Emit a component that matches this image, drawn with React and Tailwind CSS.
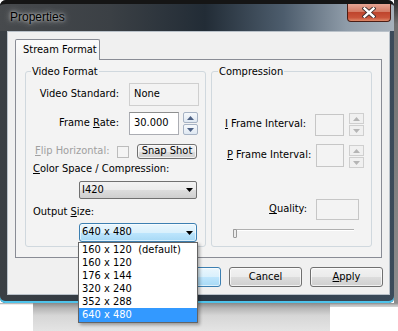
import React from 'react'

const btn =
  'flex items-center justify-center rounded-[3px] border border-[#707070] bg-[linear-gradient(180deg,#f2f2f2_0%,#ebebeb_50%,#dddddd_50%,#cfcfcf_100%)] shadow-[inset_0_0_0_1px_rgba(255,255,255,0.7)]'
const btnBlue =
  'rounded-[3px] border border-[#3c7fb1] bg-[linear-gradient(180deg,#eaf6fd_0%,#d9f0fc_50%,#bee6fd_50%,#a7d9f5_100%)] shadow-[inset_0_0_0_1px_rgba(255,255,255,0.6)]'

function Arrow({ up, color }) {
  return (
    <svg width="7" height="4" viewBox="0 0 7 4">
      <path d={up ? 'M0 4 L7 4 L3.5 0 Z' : 'M0 0 L7 0 L3.5 4 Z'} fill={color} />
    </svg>
  )
}

function Spin({ enabled }) {
  const part = enabled
    ? 'flex-1 flex items-center justify-center border border-[#a7b3c4] rounded-[2px] bg-[linear-gradient(180deg,#f6f9fc,#dfe8f2)]'
    : 'flex-1 flex items-center justify-center border border-[#cfcfcf] bg-[#f0f0f0]'
  const c = enabled ? '#4d6185' : '#b5b5b5'
  return (
    <div className="flex flex-col gap-px w-[15px] h-[23px]">
      <div className={part}><Arrow up color={c} /></div>
      <div className={part}><Arrow color={c} /></div>
    </div>
  )
}

function Combo({ label, open }) {
  return (
    <div className={'relative ml-[53px] w-[118px] flex items-center justify-between pl-[2px] pr-[3px] ' + (open ? 'h-[19px] ' + btnBlue : 'h-[18px] rounded-[2px] border border-[#707070] bg-[linear-gradient(180deg,#f2f2f2_0%,#ebebeb_50%,#dddddd_50%,#cfcfcf_100%)]')}>
      <span>{label}</span>
      <Arrow color="#000" />
      {open && (
        <div className="absolute z-20 left-[-2px] top-[18px] w-[120px] border border-[#646464] bg-white shadow-[2px_2px_3px_rgba(0,0,0,0.3)]">
          {['160 x 120  (default)', '160 x 120', '176 x 144', '320 x 240', '352 x 288'].map((s) => (
            <div key={s} className="h-[13px] leading-[13px] pl-[3px] whitespace-pre">{s}</div>
          ))}
          <div className="h-[14px] leading-[14px] pl-[3px] bg-[#3399ff] text-white">640 x 480</div>
        </div>
      )}
    </div>
  )
}

function App() {
  return (
    <div className="w-[398px] h-[331px] bg-white overflow-hidden flex flex-col font-['DejaVu_Sans_Condensed','Liberation_Sans',sans-serif] text-[11px] text-black">
      <div className="flex h-[303px] shrink-0">
        <div className="w-[394px] flex flex-col rounded-t-[6px] rounded-b-[5px] bg-[linear-gradient(90deg,#3a3f44_0%,#2b3642_50%,#3b4b5a_100%)] shadow-[inset_0_-2px_0_#4fc3ea]">
          {/* title bar */}
          <div className="h-[31px] shrink-0 border-t-[4px] border-[#151515] rounded-t-[6px] bg-[linear-gradient(90deg,#474a4d_0%,#3b4045_28%,#222c36_52%,#4d5d6d_72%,#8f9ca9_88%,#a7b1bb_100%)] flex justify-between">
            <span className="ml-[10px] mt-[6px] leading-[15px] text-[12px] font-['Liberation_Sans',sans-serif] [text-shadow:0_0_6px_rgba(255,255,255,0.8),0_0_3px_rgba(255,255,255,0.6)]">
              Properties
            </span>
            <div className="mr-[3px] w-[44px] h-[18px] rounded-b-[4px] border border-t-0 border-[#4a1d14] bg-[linear-gradient(180deg,#e6a595_0%,#d47c66_45%,#bf452d_50%,#c9543a_80%,#de8868_100%)] flex items-center justify-center">
              <svg width="14" height="11" viewBox="0 0 14 11">
                <path d="M2.5 1.5 L11.5 9.5 M11.5 1.5 L2.5 9.5" stroke="#3a2a2a" strokeWidth="4.2" strokeLinecap="square" />
                <path d="M2.5 1.5 L11.5 9.5 M11.5 1.5 L2.5 9.5" stroke="#fff" strokeWidth="2.4" strokeLinecap="square" />
              </svg>
            </div>
          </div>

          {/* client area */}
          <div className="ml-[7px] mr-[4px] h-[264px] bg-[#f0f0f0] border border-[#b9c1c9] pl-[7px] pt-[7px]">
            <div className="relative z-10 -mb-px w-[85px] h-[21px] border border-b-0 border-[#898c95] rounded-t-[2px] bg-[linear-gradient(180deg,#fbfbfb,#f3f3f3)] pl-[7px] leading-[20px]">
              Stream Format
            </div>
            <div className="w-[367px] h-[199px] border border-[#898c95] bg-[#f3f3f3] flex gap-[5px] pl-[9px] pt-[5px]">
              {/* video format */}
              <fieldset className="w-[181px] h-[182px] border border-[#d0d8de] rounded-[3px]">
                <legend className="ml-[5px] px-[1px] leading-[13px]">Video Format</legend>
                <div className="flex items-center mt-[5px] h-[23px]">
                  <span className="w-[93px] text-right">Video Standard:</span>
                  <div className="ml-[10px] w-[70px] h-[23px] border border-[#cfcfcf] pl-[4px] flex items-center">None</div>
                </div>
                <div className="flex items-center mt-[6px] h-[23px]">
                  <span className="w-[93px] text-right">
                    Frame <span className="underline">R</span>ate:
                  </span>
                  <div className="ml-[10px] w-[50px] h-[23px] border border-[#abadb3] border-t-[#8e8f8f] bg-white pl-[4px] flex items-center">30.000</div>
                  <div className="ml-[4px]"><Spin enabled /></div>
                </div>
                <div className="flex items-center mt-[9px] h-[15px] pl-[9px]">
                  <span className="w-[82px] text-[#a0a0a0]">
                    <span className="underline">F</span>lip Horizontal:
                  </span>
                  <div className="w-[12px] h-[12px] border border-[#bcbcbc] bg-[#f4f4f4]" />
                  <div className={'ml-[8px] w-[60px] h-[15px] ' + btn + ' border-[#3d3d3d]'}>Snap Shot</div>
                </div>
                <div className="mt-[3px] leading-[14px] pl-[7px]">
                  <span className="underline">C</span>olor Space / Compression:
                </div>
                <div className="mt-[5px]"><Combo label="I420" /></div>
                <div className="mt-[6px] leading-[14px] pl-[7px]">
                  Output <span className="underline">S</span>ize:
                </div>
                <div className="mt-[4px]"><Combo label="640 x 480" open /></div>
              </fieldset>

              {/* compression */}
              <fieldset className="w-[161px] h-[182px] border border-[#d0d8de] rounded-[3px]">
                <legend className="ml-[6px] px-[1px] leading-[13px]">Compression</legend>
                <div className="flex items-center mt-[35px] h-[23px]">
                  <span className="w-[103px] pl-[13px]">
                    <span className="underline">I</span> Frame Interval:
                  </span>
                  <div className="w-[29px] h-[22px] border border-[#c6c6c6]" />
                  <div className="ml-[5px]"><Spin /></div>
                </div>
                <div className="flex items-center mt-[8px] h-[23px]">
                  <span className="w-[104px] pl-[15px]">
                    <span className="underline">P</span> Frame Interval:
                  </span>
                  <div className="w-[28px] h-[23px] border border-[#c6c6c6]" />
                  <div className="ml-[5px] mt-[2px]"><Spin /></div>
                </div>
                <div className="flex items-center mt-[32px] h-[21px]">
                  <span className="w-[95px] text-right">
                    <span className="underline">Q</span>uality:
                  </span>
                  <div className="ml-[9px] w-[43px] h-[21px] border border-[#c6c6c6]" />
                </div>
                <div className="relative mt-[9px] h-[9px] ml-[21px] w-[121px]">
                  <div className="mt-[4px] h-[2px] border-t border-[#b0b0b0] border-b border-b-white" />
                  <div className="absolute left-0 top-0 w-[4px] h-[9px] border border-[#9a9a9a] bg-[#ececec] rounded-[1px]" />
                </div>
              </fieldset>
            </div>

            <div className="flex justify-end gap-[8px] mt-[9px] pr-[6px]">
              <div className={'w-[73px] h-[20px] flex items-center justify-center ' + btnBlue}>OK</div>
              <div className={'w-[73px] h-[20px] ' + btn}>Cancel</div>
              <div className={'w-[73px] h-[20px] ' + btn}>
                <span><span className="underline">A</span>pply</span>
              </div>
            </div>
          </div>
        </div>
        <div className="w-[4px] bg-[linear-gradient(180deg,#2a2a2a_0%,#6f6f6f_8%,#8d8d8d_100%)]" />
      </div>

      {/* shadow below window */}
      <div className="flex h-[28px] shrink-0">
        <div className="w-[33px] bg-[linear-gradient(180deg,#9a9a9a_0px,#d8d8d8_1px,#ffffff_2px)]" />
        <div className="flex-1 bg-[linear-gradient(180deg,#8a8a8a_0%,#b5b5b5_18%,#d6d6d6_45%,#e4e4e4_100%)]" />
        <div className="w-[68px] bg-[linear-gradient(180deg,#8a8a8a_0px,#bcbcbc_2px,#d4d4d4_4px,#ffffff_4px)]" />
      </div>
    </div>
  )
}

export default App
